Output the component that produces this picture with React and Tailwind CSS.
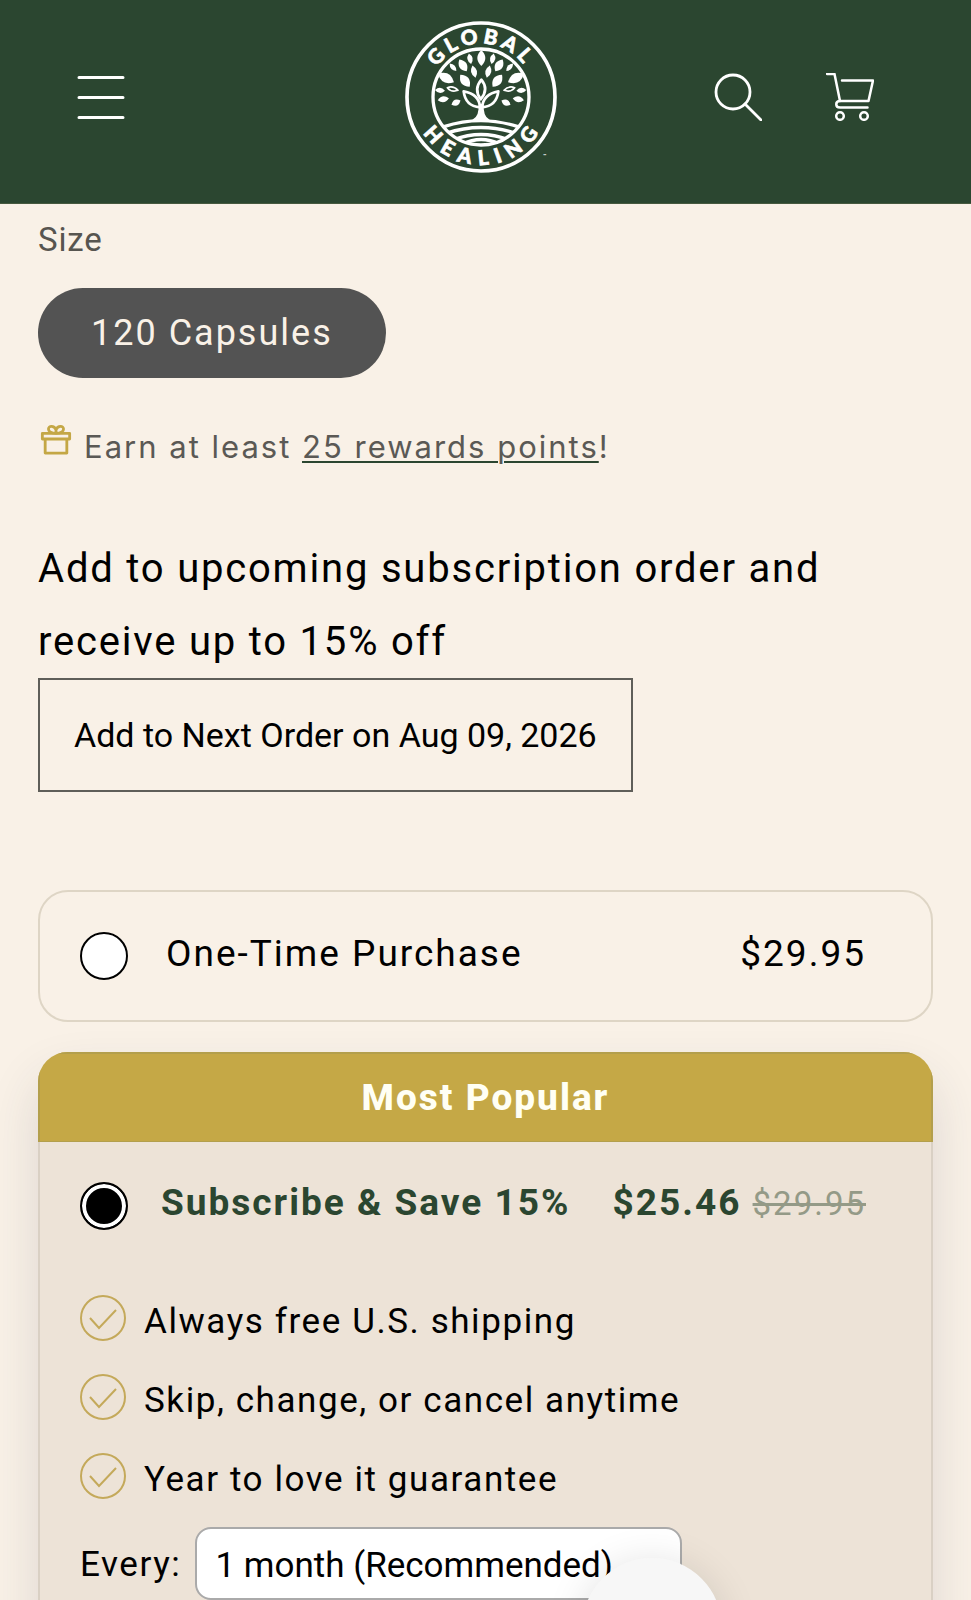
import React, { useState } from 'react';

const perks = [
  'Always free U.S. shipping',
  'Skip, change, or cancel anytime',
  'Year to love it guarantee',
];

// x, y, length, half width, rotation of every leaf in the crown
const leaves = [
  [272, 144, 24, 12, 0],
  [238, 146, 16, 8, -12],
  [306, 146, 16, 8, 12],
  [217, 166, 21, 12, -32],
  [325, 166, 21, 12, 32],
  [250, 185, 19, 9, -14],
  [293, 185, 19, 9, 14],
  [187, 172, 15, 7, -42],
  [357, 172, 15, 7, 42],
  [166, 204, 27, 14, -62],
  [376, 204, 27, 14, 62],
  [223, 212, 23, 13, -38],
  [320, 212, 23, 13, 38],
  [148, 241, 15, 8, -85],
  [392, 241, 15, 8, 85],
  [158, 268, 17, 9, -100],
  [383, 268, 17, 9, 100],
  [196, 278, 15, 9, 65],
  [346, 278, 15, 9, -65],
];

const Logo = () => (
  <svg viewBox="40 30 462 462" className="size-[154px]" role="img" aria-label="Global Healing">
    <defs>
      <path id="arc-top" d="M111 261a160 160 0 0 1 320 0" />
      <path id="arc-bottom" d="M67 261a204 204 0 0 0 408 0" />
      <clipPath id="ground">
        <circle cx="271" cy="261" r="144" />
      </clipPath>
    </defs>
    <g fill="none" stroke="#fff">
      <circle cx="271" cy="261" r="222" strokeWidth="11" />
      <circle cx="271" cy="261" r="144" strokeWidth="10" />
      <g clipPath="url(#ground)" strokeWidth="10">
        <path d="M160 350Q271 314 382 350" />
        <path d="M166 370Q271 335 376 370" />
        <path d="M190 389Q271 358 352 389" />
        <path d="M215 403Q271 374 328 403" />
      </g>
      <g strokeWidth="8" strokeLinejoin="round">
        <path d="M272 209Q248 238 270 268Q296 238 272 209Z" />
        <path d="M268 292Q266 252 219 244Q224 288 268 292Z" />
        <path d="M274 292Q278 252 323 244Q318 288 274 292Z" />
        <path d="M170 233Q188 226 202 241Q182 248 170 233Z" strokeWidth="5" />
        <path d="M372 233Q354 226 340 241Q360 248 372 233Z" strokeWidth="5" />
      </g>
    </g>
    <path fill="#fff" d="M264 282h15q-2 36 16 46l6 6h-60l6-6q19-10 17-46Z" />
    <g fill="#fff">
      {leaves.map(([x, y, l, w, r], i) => (
        <path
          key={i}
          transform={`translate(${x} ${y}) rotate(${r})`}
          d={`M0 ${-l}Q${w * 2} 0 0 ${l}Q${-w * 2} 0 0 ${-l}Z`}
        />
      ))}
    </g>
    <g fill="#fff" fontFamily="Lato, sans-serif" fontWeight="900" fontSize="62" textAnchor="middle">
      <text letterSpacing="12" stroke="#fff" strokeWidth="2">
        <textPath href="#arc-top" startOffset="50%">GLOBAL</textPath>
      </text>
      <text letterSpacing="24" stroke="#fff" strokeWidth="2">
        <textPath href="#arc-bottom" startOffset="52%">HEALING</textPath>
      </text>
      <text x="462" y="442" fontSize="12">™</text>
    </g>
  </svg>
);

const MenuIcon = () => (
  <svg viewBox="0 0 48 48" className="size-12" fill="none" stroke="#fff" strokeWidth="3" strokeLinecap="round">
    <path d="M2 4.500h44M2 24.500h44M2 44.500h44" />
  </svg>
);

const SearchIcon = () => (
  <svg viewBox="0 0 48 48" className="size-12" fill="none" stroke="#fff" strokeWidth="2.800" strokeLinecap="round">
    <circle cx="19" cy="19" r="17" />
    <path d="M31 31l16 16" />
  </svg>
);

const CartIcon = () => (
  <svg
    viewBox="0 0 48 48"
    className="size-12"
    fill="none"
    stroke="#fff"
    strokeWidth="2.500"
    strokeLinecap="round"
    strokeLinejoin="round"
  >
    <path d="M1 1h7.500l5.500 27h28.500l4.500-20.500H16" />
    <path d="M14 28c-5 0-5 6.500 0 6.500h27.500" />
    <circle cx="14" cy="43" r="3.800" />
    <circle cx="38" cy="43" r="3.800" />
  </svg>
);

const GiftIcon = () => (
  <svg viewBox="-1 -2 34 34" className="size-8" fill="none" stroke="#c4a745" strokeWidth="3" strokeLinejoin="round">
    <rect x="1.500" y="9" width="29" height="6" />
    <path d="M4.500 15v15h23V15" />
    <path d="M16 9c-4 0-8-1-8-4.500C8 .5 14 .5 16 5v4c4 0 8-1 8-4.500C24 .5 18 .5 16 5" />
  </svg>
);

const CheckIcon = () => (
  <svg viewBox="0 0 46 46" className="size-[46px] shrink-0" fill="none" stroke="#c4a95a" strokeWidth="2">
    <circle cx="23" cy="23" r="22" />
    <path d="M10 23l9 10 17-18" />
  </svg>
);

const Radio = ({ id, checked, onChange }) => (
  <input
    type="radio"
    name="plan"
    id={id}
    checked={checked}
    onChange={onChange}
    className="size-12 shrink-0 appearance-none rounded-full border-2 border-black bg-white checked:bg-black checked:shadow-[inset_0_0_0_4px_white]"
  />
);

export default function App() {
  const [plan, setPlan] = useState('subscribe');

  return (
    <div className="h-screen overflow-hidden bg-[#f9f1e7] font-[Roboto,sans-serif] text-black">
      <header className="grid grid-cols-[1fr_auto_1fr] items-center border-b border-[#46593f] bg-[#2b4630] pt-5 pr-[63px] pb-[29px] pl-[43px]">
        <button aria-label="Menu" className="w-fit px-[34px] py-8">
          <MenuIcon />
        </button>
        <a href="#home" className="pl-[10px]">
          <Logo />
        </a>
        <div className="flex justify-end">
          <button aria-label="Search" className="px-[30px] py-8">
            <SearchIcon />
          </button>
          <button aria-label="Cart" className="px-[34px] py-8">
            <CartIcon />
          </button>
        </div>
      </header>

      <main className="px-[38px] pt-4">
        <p className="text-[33px] leading-[40px] tracking-wide text-[#575550]">Size</p>
        <button className="mt-7 h-[90px] rounded-full bg-[#535353] px-[53px] text-[36px] tracking-[2px] text-[#f9f1e7]">
          120 Capsules
        </button>

        <div className="mt-[45px] flex items-start gap-3 pl-[2px]">
          <GiftIcon />
          <p className="pt-1 font-[Inter,sans-serif] text-[31px] leading-[40px] tracking-[2px] text-[#5b5955]">
            Earn at least{' '}
            <a href="#rewards" className="underline decoration-[#2b4630] decoration-2 underline-offset-3">
              25 rewards points
            </a>
            !
          </p>
        </div>

        <h2 className="mt-[65px] text-[40px] leading-[73px] tracking-[0.045em]">
          Add to upcoming subscription order and receive up to 15% off
        </h2>
        <button className="h-[114px] border-2 border-[#5f5e59] px-[34px] text-[34px]">
          Add to Next Order on Aug 09, 2026
        </button>

        <div className="mt-[98px] flex h-[132px] items-center rounded-[30px] border-2 border-[#ded5c5] pr-[65px] pl-10">
          <Radio id="one-time" checked={plan === 'one-time'} onChange={() => setPlan('one-time')} />
          <label htmlFor="one-time" className="flex flex-1 justify-between pb-1 pl-[38px] text-[37px] tracking-[2px]">
            <span>One-Time Purchase</span>
            <span>$29.95</span>
          </label>
        </div>

        <section className="mt-[30px] overflow-hidden rounded-t-[30px] shadow-[0_26px_52px_rgba(50,60,80,0.14)]">
          <div className="h-[90px] border-2 border-b border-[#b39f4c] bg-[#c5a846] text-center text-[37px] leading-[88px] font-extrabold tracking-[2px] text-[#fffff4]">
            Most Popular
          </div>
          <div className="border-x-2 border-[#d9d0c4] bg-[#ede3d7] px-10 pt-[39px] pb-10">
            <div className="flex items-center">
              <Radio id="subscribe" checked={plan === 'subscribe'} onChange={() => setPlan('subscribe')} />
              <label
                htmlFor="subscribe"
                className="flex flex-1 items-baseline justify-between pr-[25px] pb-1 pl-[33px] text-[37px] leading-[44px] font-bold tracking-[2px] text-[#2b4630]"
              >
                <span>Subscribe &amp; Save 15%</span>
                <span>
                  $25.46 <s className="text-[33px] font-normal text-[#949a87]">$29.95</s>
                </span>
              </label>
            </div>

            <ul className="mt-[65px] space-y-[33px]">
              {perks.map((perk) => (
                <li key={perk} className="flex h-[46px] items-center gap-[18px]">
                  <CheckIcon />
                  <span className="pt-2 text-[35px] leading-[40px] tracking-[0.045em]">{perk}</span>
                </li>
              ))}
            </ul>

            <div className="mt-7 flex items-center gap-3.5">
              <label htmlFor="frequency" className="pt-1 text-[35px] tracking-[0.045em]">
                Every:
              </label>
              <select
                id="frequency"
                className="h-[73px] w-[487px] appearance-none rounded-2xl border-2 border-[#aaa] bg-white px-[18px] pt-1.5 text-[35px]"
              >
                <option>1 month (Recommended)</option>
                <option>2 months</option>
                <option>3 months</option>
              </select>
            </div>
          </div>
        </section>
      </main>

      <button
        aria-label="Open chat"
        className="fixed right-[249px] -bottom-[98px] size-[140px] rounded-full bg-[#f7f7f7] shadow-[0_4px_40px_rgba(0,0,0,0.12)]"
      />
    </div>
  );
}
